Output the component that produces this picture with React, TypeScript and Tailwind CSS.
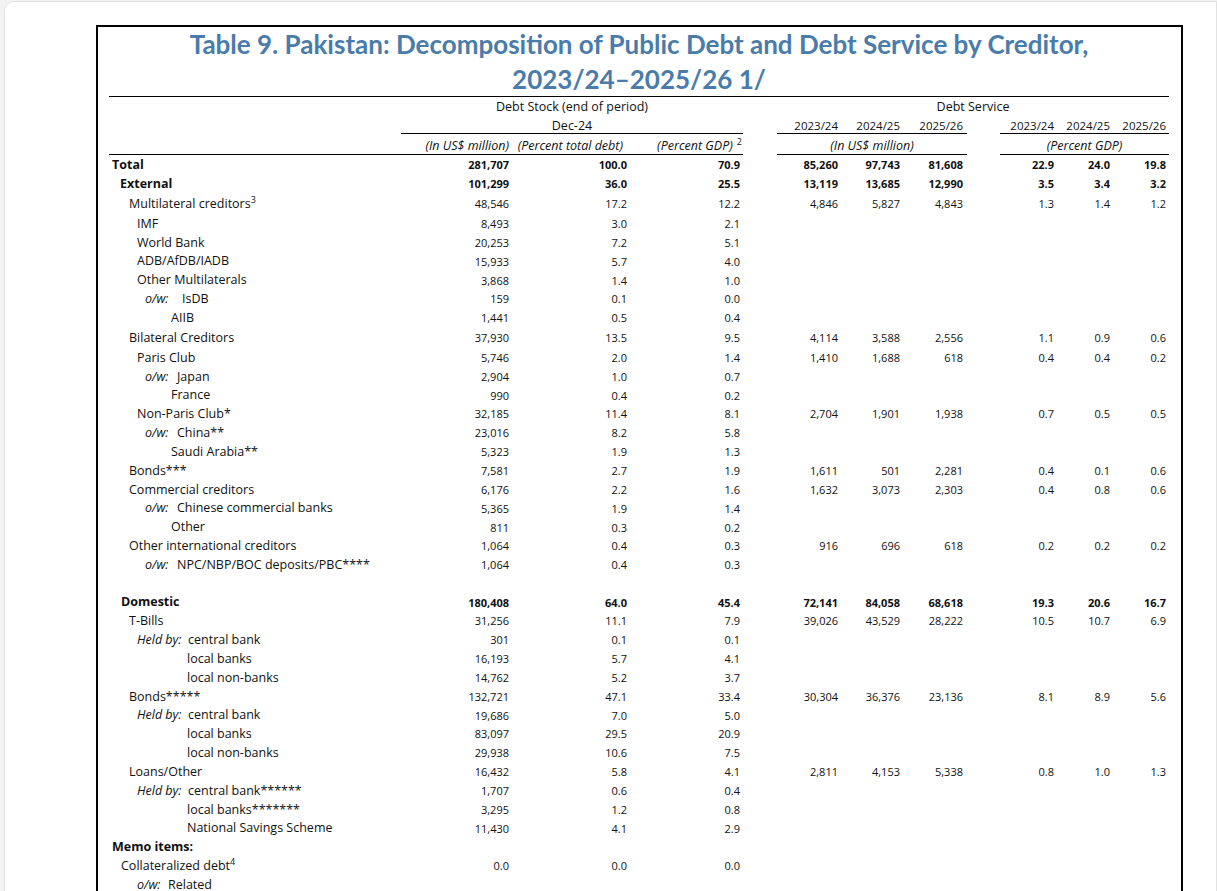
import React from "react";
import clsx from "clsx";

type Line = {
  label: React.ReactNode;
  pad: string;
  bold?: boolean;
  tall?: boolean;
  stock?: string[];
  usd?: string[];
  gdp?: string[];
  h?: string;
};

const COLS =
  "grid grid-cols-[292px_108px_118px_116px_34px_61px_62px_67px_33px_54px_56px_59px]";

const Ow = ({ w, name, tag = "o/w:" }: { w: string; name: React.ReactNode; tag?: string }) => (
  <span className="flex items-center">
    <span className={clsx("italic", w)}>{tag}</span>
    <span>{name}</span>
  </span>
);

const rows: Line[] = [
  { label: "Total", pad: "pl-[3px]", bold: true, stock: ["281,707", "100.0", "70.9"], usd: ["85,260", "97,743", "81,608"], gdp: ["22.9", "24.0", "19.8"] },
  { label: "External", pad: "pl-[11px]", bold: true, stock: ["101,299", "36.0", "25.5"], usd: ["13,119", "13,685", "12,990"], gdp: ["3.5", "3.4", "3.2"] },
  {
    label: (
      <>
        Multilateral creditors<sup className="text-[9px]">3</sup>
      </>
    ),
    pad: "pl-[20px]",
    tall: true,
    stock: ["48,546", "17.2", "12.2"],
    usd: ["4,846", "5,827", "4,843"],
    gdp: ["1.3", "1.4", "1.2"],
  },
  { label: "IMF", pad: "pl-[28px]", stock: ["8,493", "3.0", "2.1"] },
  { label: "World Bank", pad: "pl-[28px]", stock: ["20,253", "7.2", "5.1"] },
  { label: "ADB/AfDB/IADB", pad: "pl-[28px]", stock: ["15,933", "5.7", "4.0"] },
  { label: "Other Multilaterals", pad: "pl-[28px]", stock: ["3,868", "1.4", "1.0"] },
  { label: <Ow w="w-[37px]" name="IsDB" />, pad: "pl-[36px]", stock: ["159", "0.1", "0.0"] },
  { label: "AIIB", pad: "pl-[62px]", stock: ["1,441", "0.5", "0.4"] },
  { label: "Bilateral Creditors", pad: "pl-[20px]", tall: true, stock: ["37,930", "13.5", "9.5"], usd: ["4,114", "3,588", "2,556"], gdp: ["1.1", "0.9", "0.6"] },
  { label: "Paris Club", pad: "pl-[28px]", stock: ["5,746", "2.0", "1.4"], usd: ["1,410", "1,688", "618"], gdp: ["0.4", "0.4", "0.2"] },
  { label: <Ow w="w-[32px]" name="Japan" />, pad: "pl-[36px]", stock: ["2,904", "1.0", "0.7"] },
  { label: "France", pad: "pl-[62px]", stock: ["990", "0.4", "0.2"] },
  { label: "Non-Paris Club*", pad: "pl-[28px]", stock: ["32,185", "11.4", "8.1"], usd: ["2,704", "1,901", "1,938"], gdp: ["0.7", "0.5", "0.5"] },
  { label: <Ow w="w-[32px]" name="China**" />, pad: "pl-[36px]", stock: ["23,016", "8.2", "5.8"] },
  { label: "Saudi Arabia**", pad: "pl-[62px]", stock: ["5,323", "1.9", "1.3"] },
  { label: "Bonds***", pad: "pl-[20px]", stock: ["7,581", "2.7", "1.9"], usd: ["1,611", "501", "2,281"], gdp: ["0.4", "0.1", "0.6"] },
  { label: "Commercial creditors", pad: "pl-[20px]", stock: ["6,176", "2.2", "1.6"], usd: ["1,632", "3,073", "2,303"], gdp: ["0.4", "0.8", "0.6"] },
  { label: <Ow w="w-[32px]" name="Chinese commercial banks" />, pad: "pl-[36px]", stock: ["5,365", "1.9", "1.4"] },
  { label: "Other", pad: "pl-[62px]", stock: ["811", "0.3", "0.2"] },
  { label: "Other international creditors", pad: "pl-[20px]", stock: ["1,064", "0.4", "0.3"], usd: ["916", "696", "618"], gdp: ["0.2", "0.2", "0.2"] },
  { label: <Ow w="w-[32px]" name="NPC/NBP/BOC deposits/PBC****" />, pad: "pl-[36px]", stock: ["1,064", "0.4", "0.3"] },
  { label: "", pad: "", h: "h-[18.5px]" },
  { label: "Domestic", pad: "pl-[12px]", bold: true, stock: ["180,408", "64.0", "45.4"], usd: ["72,141", "84,058", "68,618"], gdp: ["19.3", "20.6", "16.7"] },
  { label: "T-Bills", pad: "pl-[20px]", stock: ["31,256", "11.1", "7.9"], usd: ["39,026", "43,529", "28,222"], gdp: ["10.5", "10.7", "6.9"] },
  { label: <Ow tag="Held by:" w="w-[51px]" name="central bank" />, pad: "pl-[28px]", stock: ["301", "0.1", "0.1"] },
  { label: "local banks", pad: "pl-[78px]", stock: ["16,193", "5.7", "4.1"] },
  { label: "local non-banks", pad: "pl-[78px]", stock: ["14,762", "5.2", "3.7"] },
  { label: "Bonds*****", pad: "pl-[20px]", stock: ["132,721", "47.1", "33.4"], usd: ["30,304", "36,376", "23,136"], gdp: ["8.1", "8.9", "5.6"] },
  { label: <Ow tag="Held by:" w="w-[51px]" name="central bank" />, pad: "pl-[28px]", stock: ["19,686", "7.0", "5.0"] },
  { label: "local banks", pad: "pl-[78px]", stock: ["83,097", "29.5", "20.9"] },
  { label: "local non-banks", pad: "pl-[78px]", stock: ["29,938", "10.6", "7.5"] },
  { label: "Loans/Other", pad: "pl-[20px]", stock: ["16,432", "5.8", "4.1"], usd: ["2,811", "4,153", "5,338"], gdp: ["0.8", "1.0", "1.3"] },
  { label: <Ow tag="Held by:" w="w-[51px]" name="central bank******" />, pad: "pl-[28px]", stock: ["1,707", "0.6", "0.4"] },
  { label: "local banks*******", pad: "pl-[78px]", stock: ["3,295", "1.2", "0.8"] },
  { label: "National Savings Scheme", pad: "pl-[78px]", stock: ["11,430", "4.1", "2.9"] },
  { label: "Memo items:", pad: "pl-[3px]", bold: true },
  {
    label: (
      <>
        Collateralized debt<sup className="text-[9px]">4</sup>
      </>
    ),
    pad: "pl-[12px]",
    stock: ["0.0", "0.0", "0.0"],
  },
  { label: <Ow w="w-[31px]" name="Related" />, pad: "pl-[28px]" },
];

const numPad = ["", "", "pr-[3px]"];
const usdPad = ["", "", "pr-[4px]"];
const gdpPad = ["", "", "pr-[3px]"];

function Cells({ vals, pads, bold }: { vals?: string[]; pads: string[]; bold?: boolean }) {
  return (
    <>
      {[0, 1, 2].map((i) => (
        <div key={i} className={clsx("pt-[1px] text-right text-[11px] leading-none", pads[i], bold && "font-bold")}>
          {vals?.[i] ?? ""}
        </div>
      ))}
    </>
  );
}

function Row({ r }: { r: Line }) {
  return (
    <div className={clsx(COLS, "items-center", r.h ?? (r.tall ? "h-[20.9px]" : "h-[18.85px]"))}>
      <div className={clsx("flex items-center whitespace-nowrap pt-[2px] text-[12.5px] leading-none", r.pad, r.bold && "font-bold")}>
        {r.label}
      </div>
      <Cells vals={r.stock} pads={numPad} bold={r.bold} />
      <div />
      <Cells vals={r.usd} pads={usdPad} bold={r.bold} />
      <div />
      <Cells vals={r.gdp} pads={gdpPad} bold={r.bold} />
    </div>
  );
}

function Header() {
  return (
    <div className="border-t border-black">
      <div className={clsx(COLS, "h-[19px] items-center pt-[2px] text-[12.5px] leading-none")}>
        <div />
        <div className="col-span-3 text-center">Debt Stock (end of period)</div>
        <div />
        <div className="col-span-7 text-center">Debt Service</div>
      </div>
      <div className={clsx(COLS, "h-[18px] text-[11.5px] leading-none")}>
        <div />
        <div className="col-span-3 flex items-center justify-center border-b border-black pt-[3px] text-[12.5px]">Dec-24</div>
        <div />
        <div className="flex items-center justify-end border-b border-black pt-[3px]">2023/24</div>
        <div className="flex items-center justify-end border-b border-black pt-[3px]">2024/25</div>
        <div className="flex items-center justify-end border-b border-black pr-[4px] pt-[3px]">2025/26</div>
        <div />
        <div className="flex items-center justify-end border-b border-black pt-[3px]">2023/24</div>
        <div className="flex items-center justify-end border-b border-black pt-[3px]">2024/25</div>
        <div className="flex items-center justify-end border-b border-black pr-[3px] pt-[3px]">2025/26</div>
      </div>
      <div className={clsx(COLS, "h-[21px] text-[12.5px] italic leading-none")}>
        <div className="border-b border-black" />
        <div className="flex items-center justify-end border-b border-black pt-[4px]">(In US$ million)</div>
        <div className="flex items-center justify-end border-b border-black pr-[4px] pt-[4px]">(Percent total debt)</div>
        <div className="flex items-center justify-end border-b border-black pr-[1px] pt-[4px]">
          (Percent GDP)<sup className="ml-[4px] text-[9px] not-italic">2</sup>
        </div>
        <div />
        <div className="col-span-3 flex items-center justify-center border-b border-black pt-[4px]">(In US$ million)</div>
        <div />
        <div className="col-span-3 flex items-center justify-center border-b border-black pt-[4px]">(Percent GDP)</div>
      </div>
    </div>
  );
}

export default function App() {
  return (
    <div className="h-[891px] overflow-hidden bg-[#f2f2f2] pl-[4px] pt-[1px]">
      <div className="h-[900px] overflow-hidden rounded-tl-[10px] border border-[#e2e2e2] bg-white pl-[91px] pt-[23px]">
        <div className="h-[900px] w-[1087px] border-2 border-black pl-[11px] pr-[12px] font-['Open_Sans',sans-serif] text-[#111]">
          <div className="text-center font-['Lato',sans-serif] text-[26px] font-bold leading-[34.5px] text-[#4a7cab]">
            <div>Table 9. Pakistan: Decomposition of Public Debt and Debt Service by Creditor,</div>
            <div>2023/24–2025/26 1/</div>
          </div>
          <Header />
          {rows.map((r, i) => (
            <Row key={i} r={r} />
          ))}
        </div>
      </div>
    </div>
  );
}
